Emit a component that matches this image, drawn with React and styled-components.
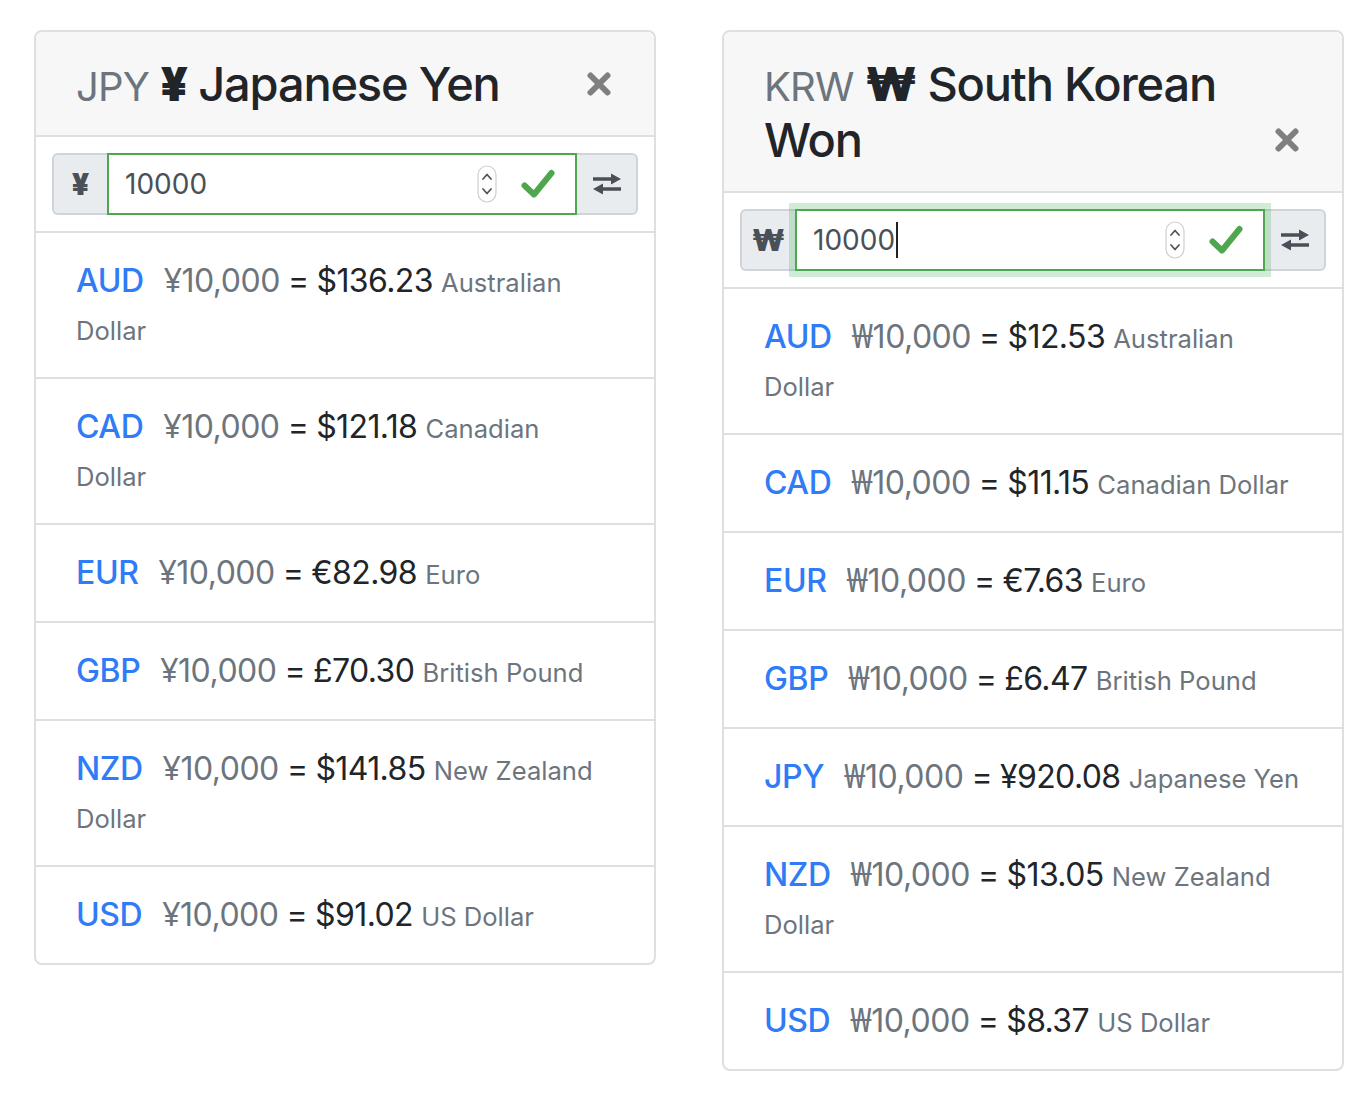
import React from 'react';
import styled, { createGlobalStyle } from 'styled-components';

const Global = createGlobalStyle`
  html, body { margin: 0; padding: 0; background: #fff; }
  body {
    font-family: Inter, "Noto Sans", "DejaVu Sans", sans-serif;
    color: #212529;
    font-size: 32px;
    line-height: 1.5;
  }
`;

const Page = styled.div`
  display: flex;
  align-items: flex-start;
  gap: 66px;
  padding: 30px 0 30px 34px;
`;

const Card = styled.section`
  width: 622px;
  box-sizing: border-box;
  border: 2px solid #dfdfdf;
  border-radius: 8px;
  background: #fff;
  overflow: hidden;
`;

const Header = styled.header`
  display: flex;
  align-items: flex-end;
  justify-content: space-between;
  gap: 16px;
  padding: 24px 40px 23px;
  background: #f7f7f7;
  border-bottom: 2px solid #dfdfdf;
`;

const Title = styled.h4`
  margin: 0;
  font-size: 47px;
  line-height: 56px;
  font-weight: 500;
  letter-spacing: -1.2px;
  color: #212529;
`;

const TitleCode = styled.small`
  font-size: 40px;
  line-height: 1;
  font-weight: 400;
  letter-spacing: -0.8px;
  color: #6c757d;
`;

const TitleSign = styled.span`
  font-weight: 900;
  line-height: 1;
`;

const CloseButton = styled.button`
  flex: none;
  width: 30px;
  height: 56px;
  border: 0;
  padding: 0;
  background: transparent;
  display: flex;
  align-items: center;
  justify-content: center;
  cursor: pointer;
`;

const Body = styled.div`
  padding: 16px;
  border-bottom: 2px solid #dfdfdf;
`;

const InputGroup = styled.div`
  display: flex;
  align-items: stretch;
  height: 62px;
`;

const Prepend = styled.span`
  display: flex;
  align-items: center;
  justify-content: center;
  width: 55px;
  box-sizing: border-box;
  background: #e9ecef;
  border: 2px solid #ced4da;
  border-right: 0;
  border-radius: 6px 0 0 6px;
  color: #495057;
  font-size: 30px;
  font-weight: 900;
`;

const Field = styled.div`
  position: relative;
  z-index: 1;
  flex: 1;
  display: flex;
  align-items: center;
  box-sizing: border-box;
  padding: 0 20px 0 16px;
  border: 2px solid #4ea64f;
  background: #fff;
  box-shadow: ${p => (p.$focused ? '0 0 0 6px rgba(40, 167, 69, 0.22)' : 'none')};
`;

const Value = styled.span`
  font-size: 28px;
  color: #495057;
  line-height: 1;
`;

const Caret = styled.span`
  display: inline-block;
  width: 2px;
  height: 36px;
  margin-left: 1px;
  background: #222;
`;

const Spacer = styled.span`
  flex: 1;
`;

const Spinner = styled.svg`
  margin-right: 24px;
`;

const SwapButton = styled.button`
  width: 61px;
  box-sizing: border-box;
  background: #e9ecef;
  border: 2px solid #ced4da;
  border-left: 0;
  border-radius: 0 6px 6px 0;
  padding: 0;
  display: flex;
  align-items: center;
  justify-content: center;
  cursor: pointer;
`;

const List = styled.ul`
  list-style: none;
  margin: 0;
  padding: 0;
`;

const Item = styled.li`
  padding: 24px 40px;
  font-size: 32px;
  line-height: 48px;
  letter-spacing: -0.85px;
  border-bottom: 2px solid #dfdfdf;
  &:last-child { border-bottom: 0; }
`;

const ItemCode = styled.span`
  color: #2f7cf6;
  font-weight: 500;
  margin-right: 20px;
  letter-spacing: -0.4px;
`;

const Amount = styled.span`
  color: #6c757d;
  letter-spacing: -0.5px;
`;

const AmountSign = styled.span`
  font-family: "Noto Sans", Inter, sans-serif;
  line-height: 1;
`;

const Result = styled.span`
  color: #212529;
  letter-spacing: -0.6px;
`;

const Name = styled.small`
  font-size: 25.6px;
  line-height: 1;
  letter-spacing: 0;
  color: #6c757d;
`;

const CloseIcon = () => (
  <svg width="24" height="24" viewBox="0 0 24 24">
    <path d="M3.5 3.5 L20.5 20.5 M20.5 3.5 L3.5 20.5" stroke="#7f7f7f" strokeWidth="6" strokeLinecap="round" />
  </svg>
);

const SpinnerIcon = () => (
  <Spinner width="20" height="38" viewBox="0 0 20 38">
    <rect x="1" y="1" width="18" height="36" rx="9" fill="#fff" stroke="#cfcfcf" strokeWidth="1.2" />
    <path d="M6 14 L10 9.5 L14 14" fill="none" stroke="#555" strokeWidth="1.8" strokeLinecap="round" strokeLinejoin="round" />
    <path d="M6 24 L10 28.5 L14 24" fill="none" stroke="#555" strokeWidth="1.8" strokeLinecap="round" strokeLinejoin="round" />
  </Spinner>
);

const CheckIcon = () => (
  <svg width="34" height="30" viewBox="0 0 34 30">
    <path d="M3.5 16.5 L13 25.5 L30.5 4" fill="none" stroke="#4ea64f" strokeWidth="6" strokeLinecap="round" strokeLinejoin="round" />
  </svg>
);

const SwapIcon = () => (
  <svg width="30" height="24" viewBox="0 0 30 24">
    <path d="M1 5.2 H19 V1.5 L29 7 L19 12.5 V8.8 H1 Z" fill="#495057" />
    <path d="M29 15.2 H11 V11.5 L1 17 L11 22.5 V18.8 H29 Z" fill="#495057" />
  </svg>
);

const data = [
  {
    code: 'JPY',
    sign: '¥',
    name: 'Japanese Yen',
    focused: false,
    rows: [
      ['AUD', '$136.23', 'Australian Dollar'],
      ['CAD', '$121.18', 'Canadian Dollar'],
      ['EUR', '€82.98', 'Euro'],
      ['GBP', '£70.30', 'British Pound'],
      ['NZD', '$141.85', 'New Zealand Dollar'],
      ['USD', '$91.02', 'US Dollar'],
    ],
  },
  {
    code: 'KRW',
    sign: '₩',
    name: 'South Korean Won',
    focused: true,
    rows: [
      ['AUD', '$12.53', 'Australian Dollar'],
      ['CAD', '$11.15', 'Canadian Dollar'],
      ['EUR', '€7.63', 'Euro'],
      ['GBP', '£6.47', 'British Pound'],
      ['JPY', '¥920.08', 'Japanese Yen'],
      ['NZD', '$13.05', 'New Zealand Dollar'],
      ['USD', '$8.37', 'US Dollar'],
    ],
  },
];

const CurrencyCard = ({ c }) => (
  <Card>
    <Header>
      <Title>
        <TitleCode>{c.code}</TitleCode> <TitleSign>{c.sign}</TitleSign> {c.name}
      </Title>
      <CloseButton aria-label="Close">
        <CloseIcon />
      </CloseButton>
    </Header>
    <Body>
      <InputGroup>
        <Prepend>{c.sign}</Prepend>
        <Field $focused={c.focused}>
          <Value>10000</Value>
          {c.focused && <Caret />}
          <Spacer />
          <SpinnerIcon />
          <CheckIcon />
        </Field>
        <SwapButton aria-label="Swap">
          <SwapIcon />
        </SwapButton>
      </InputGroup>
    </Body>
    <List>
      {c.rows.map(([code, value, name]) => (
        <Item key={code}>
          <ItemCode>{code}</ItemCode>
          <Amount>
            <AmountSign>{c.sign}</AmountSign>10,000
          </Amount> = <Result>{value}</Result> <Name>{name}</Name>
        </Item>
      ))}
    </List>
  </Card>
);

export default function App() {
  return (
    <>
      <Global />
      <Page>
        {data.map(c => (
          <CurrencyCard key={c.code} c={c} />
        ))}
      </Page>
    </>
  );
}
